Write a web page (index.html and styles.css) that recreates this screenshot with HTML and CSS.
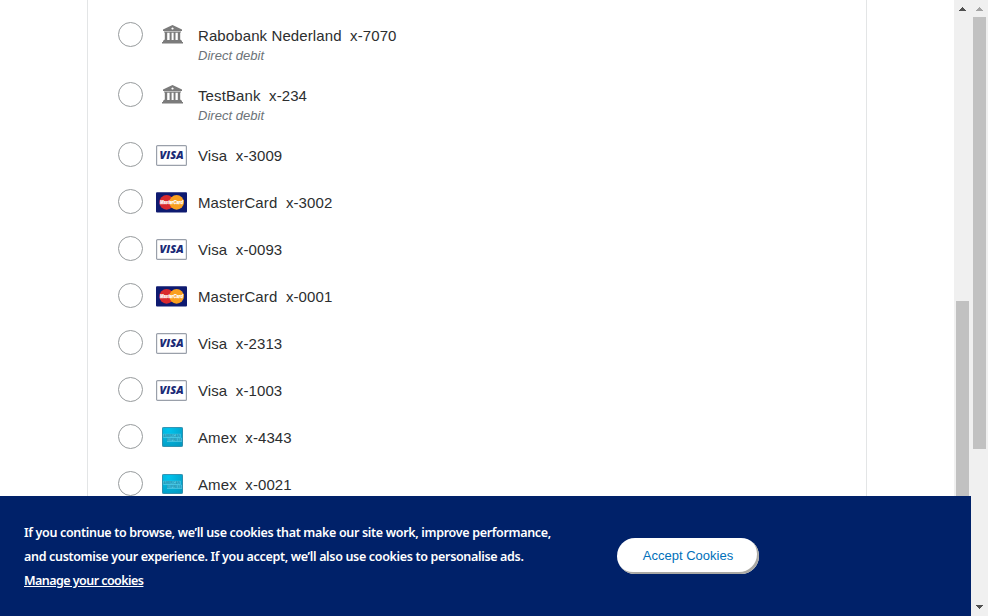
FILE: index.html
```
<!DOCTYPE html>
<html lang="en">
<head>
<meta charset="utf-8">
<title>Payment methods</title>
<link rel="stylesheet" href="styles.css">
</head>
<body>
<svg class="defs" aria-hidden="true">
  <symbol id="bank" viewBox="0 0 21 19">
    <path fill="#7b7b7b" fill-rule="evenodd" d="M10.5 0 20 4.6V6H1V4.6ZM10.5 2.4a1.1 1.1 0 1 0 .01 0ZM2 6.6H19V7.6H18.2V14.8H19V15.6H2V14.8H2.8V7.6H2ZM5.2 7.8V14.9H7.6V7.8ZM9.6 7.8V14.9H11.6V7.8ZM13.5 7.8V14.9H15.8V7.8ZM1 15.6H20V17H21V18.4H0V17H1Z"/>
  </symbol>
  <symbol id="visa" viewBox="0 0 31 21">
    <rect x=".6" y=".6" width="29.8" height="19.8" rx="1" fill="#fff" stroke="#9aa0aa" stroke-width="1.2"/>
    <text x="3.6" y="14.1" class="visa-word" textLength="24" lengthAdjust="spacingAndGlyphs">VISA</text>
  </symbol>
  <symbol id="mastercard" viewBox="0 0 31 21">
    <rect y=".3" width="31" height="20.2" rx="1" fill="#0e1a70"/>
    <circle cx="10.6" cy="10.4" r="7.3" fill="#d9292e"/>
    <circle cx="20.6" cy="10.4" r="7.3" fill="#f9a01f"/>
    <text x="4" y="12.4" class="mc-word" textLength="23" lengthAdjust="spacingAndGlyphs">MasterCard</text>
  </symbol>
  <symbol id="amex" viewBox="0 0 21 20">
    <rect x=".4" y=".4" width="20.2" height="19.2" rx="1" fill="url(#amex-blue)" stroke="#16799a" stroke-width=".8"/>
    <rect x="1.2" y="6.8" width="17.5" height="4" fill="#64cfe8" opacity=".8"/>
    <rect x="5" y="10.8" width="15" height="4" fill="#64cfe8" opacity=".8"/>
    <text x="1.5" y="10.2" class="amex-word" textLength="16.5" lengthAdjust="spacingAndGlyphs">AMERICAN</text>
    <text x="5" y="14.4" class="amex-word" textLength="14.5" lengthAdjust="spacingAndGlyphs">EXPRESS</text>
  </symbol>
  <radialGradient id="amex-blue" cx=".3" cy=".15" r="1"><stop offset="0" stop-color="#00c4ee"/><stop offset="1" stop-color="#0499c0"/></radialGradient>
</svg>
<div class="page">
  <div class="view">
    <div class="scroll-area">
      <main class="content">
        <ul class="methods">
          <li class="method bank"><span class="radio"></span><span class="logo"><svg width="21" height="19"><use href="#bank"/></svg></span><div class="label"><p class="name">Rabobank Nederland&nbsp; x-7070</p><p class="kind">Direct debit</p></div></li>
          <li class="method bank"><span class="radio"></span><span class="logo"><svg width="21" height="19"><use href="#bank"/></svg></span><div class="label"><p class="name">TestBank&nbsp; x-234</p><p class="kind">Direct debit</p></div></li>
          <li class="method"><span class="radio"></span><span class="logo"><svg width="31" height="21"><use href="#visa"/></svg></span><p class="name">Visa&nbsp; x-3009</p></li>
          <li class="method"><span class="radio"></span><span class="logo"><svg width="31" height="21"><use href="#mastercard"/></svg></span><p class="name">MasterCard&nbsp; x-3002</p></li>
          <li class="method"><span class="radio"></span><span class="logo"><svg width="31" height="21"><use href="#visa"/></svg></span><p class="name">Visa&nbsp; x-0093</p></li>
          <li class="method"><span class="radio"></span><span class="logo"><svg width="31" height="21"><use href="#mastercard"/></svg></span><p class="name">MasterCard&nbsp; x-0001</p></li>
          <li class="method"><span class="radio"></span><span class="logo"><svg width="31" height="21"><use href="#visa"/></svg></span><p class="name">Visa&nbsp; x-2313</p></li>
          <li class="method"><span class="radio"></span><span class="logo"><svg width="31" height="21"><use href="#visa"/></svg></span><p class="name">Visa&nbsp; x-1003</p></li>
          <li class="method amex"><span class="radio"></span><span class="logo"><svg width="21" height="20"><use href="#amex"/></svg></span><p class="name">Amex&nbsp; x-4343</p></li>
          <li class="method amex"><span class="radio"></span><span class="logo"><svg width="21" height="20"><use href="#amex"/></svg></span><p class="name">Amex&nbsp; x-0021</p></li>
        </ul>
      </main>
      <div class="scrollbar">
        <svg class="arrow" width="7" height="4" shape-rendering="crispEdges"><path fill="#505050" d="M3 0h1v1h1v1h1v1h1v1H0V3h1V2h1V1h1Z"/></svg>
        <span class="thumb inner-thumb"></span>
      </div>
    </div>
    <footer class="cookies">
      <p class="notice"><span class="line first">If you continue to browse, we’ll use cookies that make our site work, improve performance,</span><span class="line second">and customise your experience. If you accept, we’ll also use cookies to personalise ads.</span><a class="manage" href="#">Manage your cookies</a></p>
      <button class="accept" type="button">Accept Cookies</button>
    </footer>
  </div>
  <div class="scrollbar outer">
    <svg class="arrow" width="7" height="4" shape-rendering="crispEdges"><path fill="#a3a3a3" d="M3 0h1v1h1v1h1v1h1v1H0V3h1V2h1V1h1Z"/></svg>
    <span class="thumb outer-thumb"></span>
    <svg class="arrow down" width="7" height="4" shape-rendering="crispEdges"><path fill="#505050" d="M0 0h7v1H6v1H5v1H4v1H3V3H2V2H1V1H0Z"/></svg>
  </div>
</div>
</body>
</html>
```
FILE: styles.css
```
* { box-sizing: border-box; }
body, p, ul { margin: 0; padding: 0; }
body { background: #fff; font-family: "Liberation Sans", Arial, sans-serif; overflow: hidden; }
.defs { display: block; width: 0; height: 0; }
.page { display: flex; width: 988px; height: 616px; }
.view { width: 971px; display: flex; flex-direction: column; }
.scroll-area { height: 496px; display: flex; overflow: hidden; }
.content { width: 954px; padding-left: 87px; }
.methods { width: 780px; height: 496px; padding: 11px 0 0 30px; border: solid #e3e5e6; border-width: 0 1px; list-style: none; overflow: hidden; }
.method { height: 47px; padding-top: 11px; display: flex; align-items: flex-start; }
.method.bank { height: 60px; }
.radio { width: 25px; height: 25px; flex: none; border: 1px solid #979b9d; border-radius: 50%; background: #fff; }
.logo { width: 31px; height: 25px; margin: 1px 11px 0 13px; flex: none; display: flex; justify-content: center; align-items: center; }
.bank .logo { margin-top: 0; padding-left: 2px; }
.amex .logo { height: 24px; padding-left: 2px; }
.name { font-size: 15px; line-height: 20px; margin-top: 4px; letter-spacing: .1px; color: #2c2e2f; white-space: nowrap; }
.kind { font-size: 13px; line-height: 20px; font-style: italic; color: #6c7378; letter-spacing: .03px; }
.visa-word { font: italic 800 10.5px "Open Sans", sans-serif; fill: #1b2a77; }
.mc-word { font: italic bold 5.2px "Liberation Sans", sans-serif; fill: #fff; stroke: #fff; stroke-width: .25px; }
.amex-word { font: bold 3.6px "Liberation Sans", sans-serif; fill: #168eaf; }
.cookies { height: 120px; padding: 0 0 0 24px; display: flex; background: #002169; }
.notice { width: 593px; padding-top: 25px; color: #fff; font: 600 12.5px/24px "Noto Sans", sans-serif; white-space: nowrap; }
.line { display: block; }
.first { letter-spacing: -.325px; }
.second { letter-spacing: -.33px; }
.manage { color: #fff; letter-spacing: -.55px; text-decoration: underline; }
.accept { width: 142px; height: 36px; margin-top: 42px; padding: 0 0 2px 0; border: 0 solid #aaa9a4; border-radius: 18px; background: #fff; box-shadow: inset -2px -2px 0 #aaa9a4; color: #0070ba; font: 13px "Liberation Sans", Arial, sans-serif; }
.scrollbar { width: 17px; display: flex; flex-direction: column; align-items: center; background: #f0f0f0; padding-top: 7px; flex: none; }
.thumb { width: 13px; background: #c1c1c1; }
.inner-thumb { height: 195px; margin-top: 290px; }
.outer-thumb { height: 432px; margin-top: 6px; }
.arrow { display: block; flex: none; }
.down { margin-top: 156px; }
```
